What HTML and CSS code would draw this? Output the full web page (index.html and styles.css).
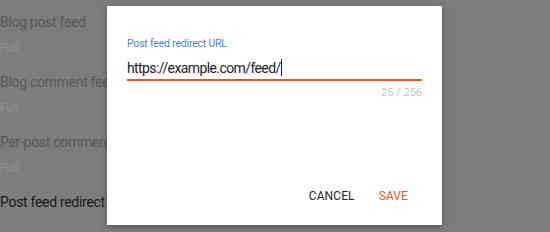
FILE: index.html
```html
<!DOCTYPE html>
<html lang="en">
  <head>
    <meta charset="UTF-8" />
    <meta name="viewport" content="width=device-width, initial-scale=1.0" />
    <title>Feed settings</title>
    <link rel="stylesheet" href="styles.css">
  </head>
  <body>
    <div class="settings">
      <div class="setting">
        <div class="setting-title">Blog post feed</div>
        <div class="setting-value">Full</div>
      </div>
      <div class="setting">
        <div class="setting-title">Blog comment feed</div>
        <div class="setting-value">Full</div>
      </div>
      <div class="setting">
        <div class="setting-title">Per-post comment feed</div>
        <div class="setting-value">Full</div>
      </div>
      <div class="setting">
        <div class="setting-title active">Post feed redirect URL</div>
      </div>
    </div>

    <div class="dialog">
      <div class="field">
        <label class="field-label">Post feed redirect URL</label>
        <div class="field-input">https://example.com/feed/<span class="caret"></span></div>
        <div class="field-count">25 / 256</div>
      </div>
      <div class="dialog-actions">
        <button type="button" class="btn">CANCEL</button>
        <button type="button" class="btn btn-save">SAVE</button>
      </div>
    </div>
  </body>
</html>
```

FILE: styles.css
```css
body {
  margin: 0;
  background-color: #7d7d7d;
  font-family: Roboto, "Liberation Sans", Arial, sans-serif;
  height: 232px;
  overflow: hidden;
  position: relative;
}
.settings {
  padding-top: 12px;
}
.setting {
  margin-bottom: 16px;
}
.setting-title {
  font-size: 14px;
  line-height: 20px;
  letter-spacing: -0.3px;
  color: #575757;
  white-space: nowrap;
}
.setting-title.active {
  color: #1c1c1c;
}
.setting-value {
  font-size: 12px;
  line-height: 16px;
  margin-top: 8px;
  color: #919191;
}
.dialog {
  position: absolute;
  top: 6px;
  left: 107px;
  width: 335px;
  height: 219px;
  box-sizing: border-box;
  background-color: #fff;
  padding: 31px 20px 14px;
  display: flex;
  flex-direction: column;
  justify-content: space-between;
  box-shadow: 0 2px 6px rgba(0, 0, 0, 0.35);
}
.field-label {
  display: block;
  font-size: 10.5px;
  line-height: 14px;
  letter-spacing: -0.2px;
  color: #4a7fe6;
}
.field-input {
  margin-top: 7px;
  font-size: 14px;
  line-height: 20px;
  letter-spacing: -0.6px;
  color: #222;
  padding-bottom: 1px;
  border-bottom: 2px solid #f4511e;
}
.caret {
  display: inline-block;
  width: 1px;
  height: 17px;
  background-color: #222;
  vertical-align: -3px;
}
.field-count {
  margin-top: 5px;
  text-align: right;
  font-size: 11px;
  line-height: 14px;
  color: #c6c6c6;
}
.dialog-actions {
  display: flex;
  justify-content: flex-end;
  gap: 8px;
  padding-right: 6px;
}
.btn {
  border: none;
  background: none;
  padding: 8px;
  font-family: inherit;
  font-size: 12px;
  line-height: 14px;
  font-weight: 400;
  letter-spacing: 0.1px;
  color: #1e1e1e;
  cursor: pointer;
}
.btn-save {
  color: #f4511e;
}
```
